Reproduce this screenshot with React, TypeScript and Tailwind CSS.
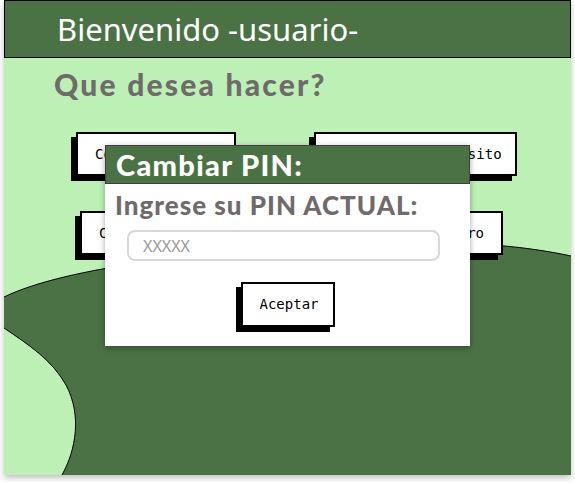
import React from 'react'

const OptionButton = ({ label, className = '' }: { label: string; className?: string }) => (
  <button
    className={`h-[44px] whitespace-nowrap border-2 border-black bg-white px-[17px] font-['DejaVu_Sans_Mono',monospace] text-[14px] text-black shadow-[-5px_5px_0_#000] ${className}`}>
    {label}
  </button>
)

const Hill = () => (
  <svg className="absolute inset-0" width="567" height="475" viewBox="0 0 567 475">
    <path
      d="M0,297 C60,268 200,248 420,243 C480,242 530,248 567,256 L567,475 L58,475 C72,450 78,415 62,385 C48,360 25,345 0,328 Z"
      fill="#4b7245"
    />
    <path
      d="M0,297 C60,268 200,248 420,243 C480,242 530,248 567,256"
      fill="none"
      stroke="#000"
      strokeWidth="1"
    />
    <path
      d="M58,475 C72,450 78,415 62,385 C48,360 25,345 0,328"
      fill="none"
      stroke="#000"
      strokeWidth="1"
    />
  </svg>
)

const App = () => {
  return (
    <div className="h-[483px] w-[575px] bg-white">
      <div className="relative ml-[4px] h-[475px] w-[567px] overflow-hidden bg-[#bdf0b5] shadow-[0_3px_6px_rgba(0,0,0,0.25)]">
        <Hill />
        <div className="relative">
          <div className="flex h-[58px] items-center border border-black bg-[#4b7245] pl-[52px]">
            <p className="font-['Noto_Sans',sans-serif] text-[31px] leading-none text-white">
              Bienvenido -usuario-
            </p>
          </div>
          <p className="mt-[6px] pl-[50px] font-['Lato',sans-serif] text-[30px] font-black leading-[40px] tracking-[2.2px] text-[#6f6b6b]">
            Que desea hacer?
          </p>
          <div className="mt-[28px] flex justify-between pl-[72px] pr-[54px]">
            <OptionButton label="Consultar saldo" className="w-[160px]" />
            <OptionButton label="Realizar un deposito" className="w-[203px]" />
          </div>
          <div className="mt-[35px] flex justify-between pl-[76px] pr-[68px]">
            <OptionButton label="Cambiar PIN" />
            <OptionButton label="Retirar dinero" />
          </div>
        </div>

        <div className="absolute left-[101px] top-[145px] h-[201px] w-[365px] bg-white shadow-[0_2px_6px_rgba(0,0,0,0.35)]">
          <div className="flex h-[39px] items-center border border-[#3f3f3f] bg-[#4b7245] pl-[10px]">
            <p className="font-['Lato',sans-serif] text-[29px] font-black leading-none tracking-[1.3px] text-white">
              Cambiar PIN:
            </p>
          </div>
          <p className="mt-[4px] pl-[10px] font-['Lato',sans-serif] text-[26px] font-black leading-[34px] tracking-[1px] text-[#6f6b6b]">
            Ingrese su PIN ACTUAL:
          </p>
          <div className="mt-[8px] px-[22px] pr-[30px]">
            <input
              placeholder="XXXXX"
              className="h-[31px] w-full rounded-[8px] border-2 border-[#d8d8d8] px-[14px] font-['Noto_Sans',sans-serif] text-[16px] text-[#555] outline-none placeholder:text-[#999]"
            />
          </div>
          <div className="mt-[21px] flex justify-center">
            <OptionButton label="Aceptar" className="h-[45px] w-[94px] px-0" />
          </div>
        </div>
      </div>
    </div>
  )
}

export default App
